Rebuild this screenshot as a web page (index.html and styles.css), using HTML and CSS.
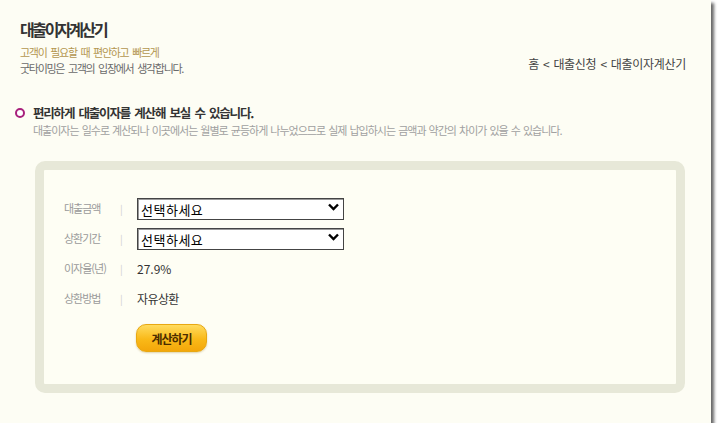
FILE: index.html
```html
<!DOCTYPE html>
<html lang="ko">
<head>
  <meta charset="UTF-8" />
  <meta name="viewport" content="width=device-width, initial-scale=1.0" />
  <title>대출이자계산기</title>
  <link rel="stylesheet" href="styles.css">
</head>
<body>

  <div class="page">

    <header class="top">
      <div class="top-left">
        <h1>대출이자계산기</h1>
        <p class="slogan gold">고객이 필요할 때 편안하고 빠르게</p>
        <p class="slogan">굿타이밍은 고객의 입장에서 생각합니다.</p>
      </div>
      <div class="crumb">홈 &lt; 대출신청 &lt; 대출이자계산기</div>
    </header>

    <div class="intro">
      <h2><span class="dot"></span>편리하게 대출이자를 계산해 보실 수 있습니다.</h2>
      <p>대출이자는 일수로 계산되나 이곳에서는 월별로 균등하게 나누었으므로 실제 납입하시는 금액과 약간의 차이가 있을 수 있습니다.</p>
    </div>

    <div class="calc-box">
      <div class="row">
        <span class="label">대출금액</span>
        <span class="sep">|</span>
        <span class="select-wrap">
          <select>
            <option>선택하세요</option>
          </select>
          <svg class="arrow" width="11" height="8" viewBox="0 0 11 8"><path d="M1 1.5 L5.5 6 L10 1.5" fill="none" stroke="#000" stroke-width="2.4"/></svg>
        </span>
      </div>
      <div class="row">
        <span class="label">상환기간</span>
        <span class="sep">|</span>
        <span class="select-wrap">
          <select>
            <option>선택하세요</option>
          </select>
          <svg class="arrow" width="11" height="8" viewBox="0 0 11 8"><path d="M1 1.5 L5.5 6 L10 1.5" fill="none" stroke="#000" stroke-width="2.4"/></svg>
        </span>
      </div>
      <div class="row">
        <span class="label">이자율(년)</span>
        <span class="sep">|</span>
        <span class="value rate">27.9%</span>
      </div>
      <div class="row">
        <span class="label">상환방법</span>
        <span class="sep">|</span>
        <span class="value">자유상환</span>
      </div>
      <div class="btn-row">
        <button class="btn-calc">계산하기</button>
      </div>
    </div>

  </div>

</body>
</html>
```

FILE: styles.css
```css
* {
  box-sizing: border-box;
  margin: 0;
  padding: 0;
}

body {
  font-family: "Noto Sans CJK KR", "Noto Sans", sans-serif;
  background: #fff;
  color: #333;
}

.page {
  width: 711px;
  height: 423px;
  background: #fdfdf4;
  box-shadow: 3px 3px 3px rgba(0, 0, 0, 0.6);
}

/* 상단 */
.top {
  display: flex;
  justify-content: space-between;
  align-items: flex-end;
  padding: 17px 25px 0 20px;
}

.top h1 {
  font-size: 16px;
  line-height: 24px;
  font-weight: bold;
  letter-spacing: -2.4px;
  color: #333;
  margin-bottom: 3px;
}

.slogan {
  font-size: 11px;
  line-height: 16px;
  letter-spacing: -1.3px;
  word-spacing: 2px;
  color: #6a6a6a;
}

.slogan.gold {
  color: #b39650;
}

.crumb {
  font-size: 12px;
  line-height: 16px;
  letter-spacing: -0.3px;
  word-spacing: 1px;
  color: #444;
  margin-bottom: 4px;
}

/* 안내 */
.intro {
  margin-top: 30px;
  padding-left: 15px;
}

.intro h2 {
  display: flex;
  align-items: center;
  font-size: 12.5px;
  line-height: 14px;
  font-weight: bold;
  letter-spacing: -1.2px;
  word-spacing: 2px;
  color: #333;
}

.dot {
  width: 10px;
  height: 10px;
  border: 2.5px solid #a8207c;
  border-radius: 50%;
  background: #fff;
  margin-right: 8px;
}

.intro p {
  font-size: 11px;
  line-height: 14px;
  letter-spacing: -1px;
  word-spacing: 1px;
  color: #a0a0a0;
  padding-left: 18px;
  margin-top: 3px;
}

/* 계산 박스 */
.calc-box {
  margin: 24px 0 0 35px;
  width: 650px;
  border: 9px solid #e7e8d8;
  border-radius: 10px;
  background: #fefef4;
  padding: 23px 0 32px 20px;
}

.row {
  display: flex;
  align-items: center;
  height: 30px;
}

.label {
  width: 56px;
  font-size: 11px;
  letter-spacing: -1px;
  color: #9a9a9a;
}

.sep {
  width: 17px;
  font-size: 10px;
  color: #d0d0d0;
}

.select-wrap {
  position: relative;
  display: inline-block;
}

.select-wrap select {
  -webkit-appearance: none;
  appearance: none;
  width: 207px;
  height: 22px;
  border: 1px solid #444;
  border-radius: 0;
  background: #fff;
  padding: 0 0 0 3px;
  font-family: "Noto Sans CJK KR", sans-serif;
  font-size: 13px;
  letter-spacing: 0.5px;
  color: #000;
  box-shadow: inset 1px 1px 0 #999;
}

.arrow {
  position: absolute;
  right: 5px;
  top: 7px;
  pointer-events: none;
}

.value {
  font-size: 12px;
  letter-spacing: -0.6px;
  color: #333;
}

.value.rate {
  letter-spacing: 0;
}

.btn-row {
  padding-left: 72px;
  margin-top: 11px;
}

.btn-calc {
  width: 71px;
  height: 28px;
  border: 1px solid #e8a812;
  border-radius: 10px;
  background: linear-gradient(to bottom, #ffdb5e, #f9b918 55%, #f3a70a);
  font-family: "Noto Sans CJK KR", sans-serif;
  font-size: 12px;
  font-weight: bold;
  letter-spacing: -1px;
  color: #4a2c00;
  box-shadow: 0 1px 2px rgba(150, 110, 0, 0.3);
}
```
